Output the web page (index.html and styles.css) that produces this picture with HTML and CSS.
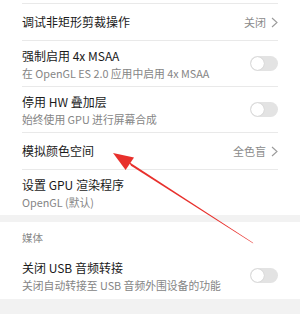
FILE: index.html
```html
<!DOCTYPE html>
<html lang="zh-CN">
<head>
    <meta charset="UTF-8">
    <meta name="viewport" content="width=device-width, initial-scale=1.0">
    <title>开发者选项</title>
    <link rel="stylesheet" href="styles.css">
</head>
<body>
    <div class="card first">
        <div class="row">
            <div class="text"><div class="title">调试非矩形剪裁操作</div></div>
            <div class="value">关闭
                <svg class="chev" width="7" height="11" viewBox="0 0 7 11"><path d="M1 1 L6 5.5 L1 10" fill="none" stroke="#9a9a9a" stroke-width="1.1"/></svg>
            </div>
        </div>
        <div class="row tall">
            <div class="text">
                <div class="title">强制启用 4x MSAA</div>
                <div class="sub">在 OpenGL ES 2.0 应用中启用 4x MSAA</div>
            </div>
            <div class="toggle"><span class="knob"></span></div>
        </div>
        <div class="row tall">
            <div class="text">
                <div class="title">停用 HW 叠加层</div>
                <div class="sub">始终使用 GPU 进行屏幕合成</div>
            </div>
            <div class="toggle"><span class="knob"></span></div>
        </div>
        <div class="row">
            <div class="text"><div class="title">模拟颜色空间</div></div>
            <div class="value">全色盲
                <svg class="chev" width="7" height="11" viewBox="0 0 7 11"><path d="M1 1 L6 5.5 L1 10" fill="none" stroke="#9a9a9a" stroke-width="1.1"/></svg>
            </div>
        </div>
        <div class="row tall">
            <div class="text">
                <div class="title">设置 GPU 渲染程序</div>
                <div class="sub">OpenGL (默认)</div>
            </div>
        </div>
    </div>

    <div class="card second">
        <div class="section">媒体</div>
        <div class="row tall plain">
            <div class="text">
                <div class="title">关闭 USB 音频转接</div>
                <div class="sub">关闭自动转接至 USB 音频外围设备的功能</div>
            </div>
            <div class="toggle"><span class="knob"></span></div>
        </div>
    </div>

    <!-- red annotation arrow over the list -->
    <svg class="arrow" width="300" height="314" viewBox="0 0 300 314">
        <polygon points="128.7,161.8 131.0,165.8 253.3,243.4 252.7,242.6" fill="#e8302c"/>
        <polygon points="113,153 134,157.6 125.6,170" fill="#e8302c"/>
    </svg>
</body>
</html>
```

FILE: styles.css
```css
*{
    margin: 0;
    padding: 0;
    box-sizing: border-box;
}
body{
    background-color: #f2f2f2;
    font-family: "Noto Sans CJK SC", "Noto Sans", sans-serif;
    width: 300px;
    height: 314px;
    overflow: hidden;
    position: relative;
}
.card{
    background-color: #ffffff;
}
.first{
    padding-top: 3px;
    height: 215px;
}
.second{
    margin-top: 7px;
    height: 77px;
}
.row{
    margin: 0 22px;
    height: 37px;
    border-top: 1px solid #e9e9e9;
    display: flex;
    align-items: center;
    justify-content: space-between;
}
.row.tall{
    height: 46px;
}
.row.plain{
    border-top: none;
    height: 47px;
}
.title{
    font-size: 12px;
    line-height: 18px;
    color: #1a1a1a;
}
.sub{
    font-size: 10.8px;
    line-height: 16px;
    color: #858585;
    white-space: nowrap;
}
.value{
    font-size: 11px;
    color: #8a8a8a;
    display: flex;
    align-items: center;
    gap: 5px;
}
.chev{
    display: block;
}
.toggle{
    width: 28px;
    height: 15px;
    border-radius: 8px;
    background-color: #e3e3e3;
    position: relative;
    flex-shrink: 0;
}
.knob{
    position: absolute;
    left: 1px;
    top: 1px;
    width: 13px;
    height: 13px;
    border-radius: 50%;
    background-color: #ffffff;
    box-shadow: 0 0 1px rgba(0,0,0,0.25);
}
.section{
    height: 30px;
    padding-left: 22px;
    display: flex;
    align-items: center;
    font-size: 10.5px;
    color: #8a8a8a;
}
.arrow{
    position: absolute;
    left: 0;
    top: 0;
}
```
